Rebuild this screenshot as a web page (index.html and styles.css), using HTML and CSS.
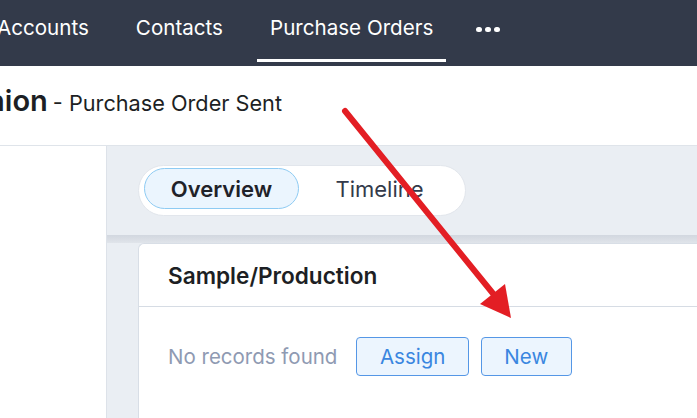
FILE: index.html
```html
<!DOCTYPE html>
<html>
<head>
<meta charset="utf-8">
<link rel="stylesheet" href="styles.css">
</head>
<body>
<nav class="topnav">
  <a class="nav-item">Accounts</a>
  <a class="nav-item">Contacts</a>
  <a class="nav-item active">Purchase Orders</a>
  <span class="nav-more"><i></i><i></i><i></i></span>
</nav>
<header class="page-head">
  <span class="title">Fashion</span>
  <span class="subtitle"><span class="dash">-</span> Purchase Order Sent</span>
</header>
<main class="main">
  <div class="side"></div>
  <section class="panel">
    <div class="tabs-area">
      <div class="tabs">
        <button class="tab selected">Overview</button>
        <button class="tab">Timeline</button>
      </div>
    </div>
    <div class="tabs-shadow"></div>
    <div class="content">
      <div class="card">
        <div class="card-head">Sample/Production</div>
        <div class="card-body">
          <span class="empty">No records found</span>
          <button class="btn">Assign</button>
          <button class="btn">New</button>
        </div>
      </div>
    </div>
  </section>
</main>
<svg class="arrow" width="697" height="418" viewBox="0 0 697 418">
  <line x1="345" y1="111" x2="495" y2="296" stroke="#e31e24" stroke-width="6" stroke-linecap="round"/>
  <polygon points="505,284 480,304 511,318" fill="#e31e24"/>
</svg>
</body>
</html>
```
FILE: styles.css
```css
* { box-sizing: border-box; }
html, body { margin: 0; padding: 0; }
body {
  width: 697px;
  height: 418px;
  overflow: hidden;
  position: relative;
  background: #ffffff;
  font-family: "Inter", "Noto Sans", sans-serif;
  color: #1f2229;
}
.topnav {
  height: 66px;
  background: #333a4a;
  display: flex;
  align-items: stretch;
  margin-left: -16px;
  gap: 21px;
}
.nav-item {
  color: #ffffff;
  font-size: 20.6px;
  padding: 0 13px;
  display: flex;
  align-items: center;
  padding-bottom: 4px;
  border-bottom: 3px solid transparent;
  margin-bottom: 4px;
}
.nav-item.active { border-bottom-color: #ffffff; }
.nav-more {
  display: flex;
  align-items: center;
  gap: 3.5px;
  padding-left: 9px;
  padding-bottom: 7px;
}
.nav-more i {
  width: 5.5px;
  height: 5.5px;
  border-radius: 50%;
  background: #ffffff;
}
.page-head {
  height: 80px;
  border-bottom: 1px solid #dfe4ea;
  display: flex;
  align-items: baseline;
  padding-top: 17px;
  margin-left: -62px;
  white-space: nowrap;
}
.title {
  font-size: 29px;
  font-weight: 600;
  color: #1d1f24;
}
.subtitle {
  font-size: 21.7px;
  color: #1d1f24;
  margin-left: 5px;
}
.dash { margin-right: 0; }
.main {
  display: flex;
  height: 272px;
}
.side {
  width: 106px;
  flex: none;
}
.panel {
  flex: 1;
  background: #eaeef3;
  border-left: 1px solid #dde2e9;
  display: flex;
  flex-direction: column;
}
.tabs-area {
  height: 89px;
  padding: 19px 0 0 31px;
}
.tabs {
  width: 328px;
  height: 51px;
  background: #ffffff;
  border: 1px solid #e2e6ec;
  border-radius: 26px;
  display: flex;
  gap: 3px;
  padding: 2px 5px;
}
.tab {
  width: 155px;
  height: 41px;
  border: 1px solid transparent;
  border-radius: 21px;
  background: transparent;
  font-family: inherit;
  font-size: 22px;
  color: #333a4a;
  padding: 0;
}
.tab.selected {
  background: #ebf5fe;
  border-color: #8ecbf3;
  font-weight: 600;
  color: #1f2229;
}
.tabs-shadow {
  height: 8px;
  background: linear-gradient(#d2d7df, #e0e4ea);
}
.content {
  flex: 1;
  padding-left: 31px;
}
.card {
  height: 100%;
  background: #ffffff;
  border: 1px solid #d8dee6;
  border-right: none;
  border-bottom: none;
  border-radius: 6px 0 0 0;
}
.card-head {
  height: 63px;
  border-bottom: 1px solid #d6dce4;
  padding-left: 29px;
  display: flex;
  align-items: center;
  font-size: 22.6px;
  font-weight: 600;
  color: #1d1f24;
}
.card-body {
  display: flex;
  align-items: center;
  padding: 30px 0 0 29px;
}
.empty {
  font-size: 20.5px;
  color: #8f9ab2;
  margin-right: 19px;
}
.btn {
  height: 39px;
  padding: 0 22.5px;
  background: #ecf5fe;
  border: 1px solid #5597e6;
  border-radius: 4px;
  font-family: inherit;
  font-size: 20.5px;
  color: #3a86e0;
  margin-right: 12px;
}
.arrow {
  position: absolute;
  left: 0;
  top: 0;
  pointer-events: none;
}
```
